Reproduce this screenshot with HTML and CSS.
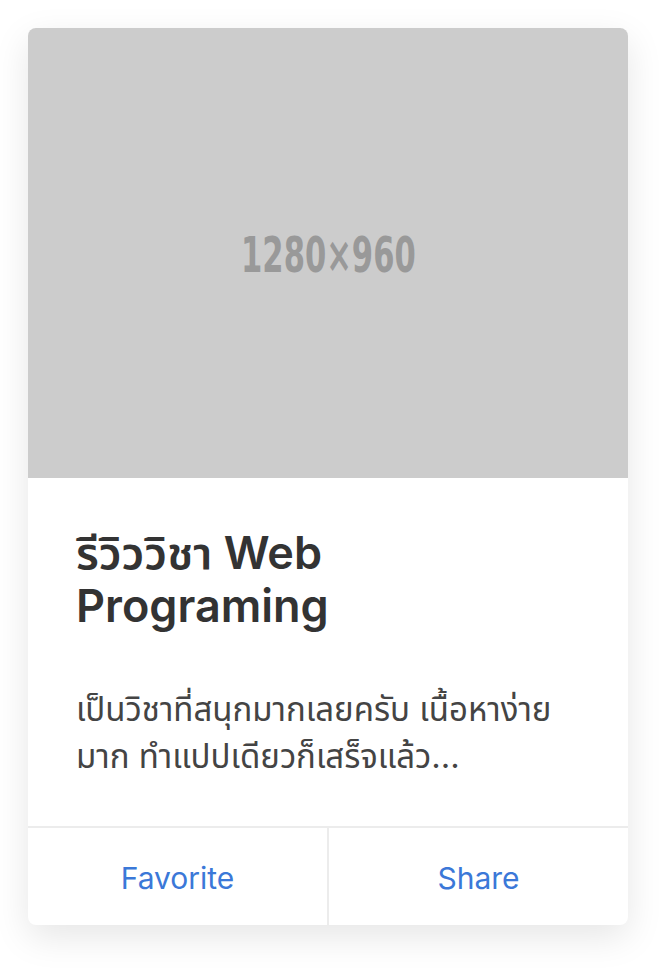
FILE: index.html
```html
<!DOCTYPE html>
<html lang="th">

<head>
    <meta charset="UTF-8">
    <meta name="viewport" content="width=device-width, initial-scale=1.0">
    <title>Review card</title>
    <link rel="stylesheet" href="styles.css">
</head>

<body>
    <div class="card">
        <!--placeholder image-->
        <div class="card-image">
            <span class="placeholder">1280×960</span>
        </div>
        <div class="card-body">
            <h1 class="card-title">รีวิววิชา Web Programing</h1>
            <p class="card-text">เป็นวิชาที่สนุกมากเลยครับ เนื้อหาง่ายมาก ทำแปปเดียวก็เสร็จแล้ว...</p>
        </div>
        <div class="card-footer">
            <button type="button" class="card-btn">Favorite</button>
            <button type="button" class="card-btn">Share</button>
        </div>
    </div>
</body>

</html>
```

FILE: styles.css
```css
html {
    background-color: #fff;
}

body {
    font-family: Inter, "Noto Sans", "Noto Sans Thai", sans-serif;
    margin: 0;
    min-height: 968px;
    padding: 28px;
    box-sizing: border-box;
}

.card {
    background-color: #fff;
    border-radius: 8px;
    box-shadow: 0 12px 36px rgba(0, 0, 0, 0.1);
    overflow: hidden;
    width: 600px;
}

.card-image {
    align-items: center;
    background-color: #cccccc;
    display: flex;
    height: 450px;
    justify-content: center;
}

.placeholder {
    color: #999;
    display: inline-block;
    font-family: "DejaVu Sans Condensed", "Liberation Sans Narrow", sans-serif;
    font-size: 50px;
    font-weight: 600;
    margin-top: 4px;
    transform: scaleX(0.68);
}

.card-body {
    padding: 48px 48px 46px;
}

.card-title {
    color: #333;
    font-size: 45px;
    font-weight: 600;
    line-height: 53px;
    margin: 0 0 54px;
}

.card-text {
    color: #444;
    font-size: 33px;
    line-height: 47px;
    margin: 0;
}

.card-footer {
    border-top: 2px solid #ececec;
    display: flex;
    height: 97px;
}

.card-btn {
    background: none;
    border: none;
    color: #3b78d8;
    cursor: pointer;
    flex: 1;
    font-family: Inter, "Noto Sans", sans-serif;
    font-size: 30px;
    padding: 2px 0 0;
}

.card-btn + .card-btn {
    border-left: 2px solid #ececec;
}
```
